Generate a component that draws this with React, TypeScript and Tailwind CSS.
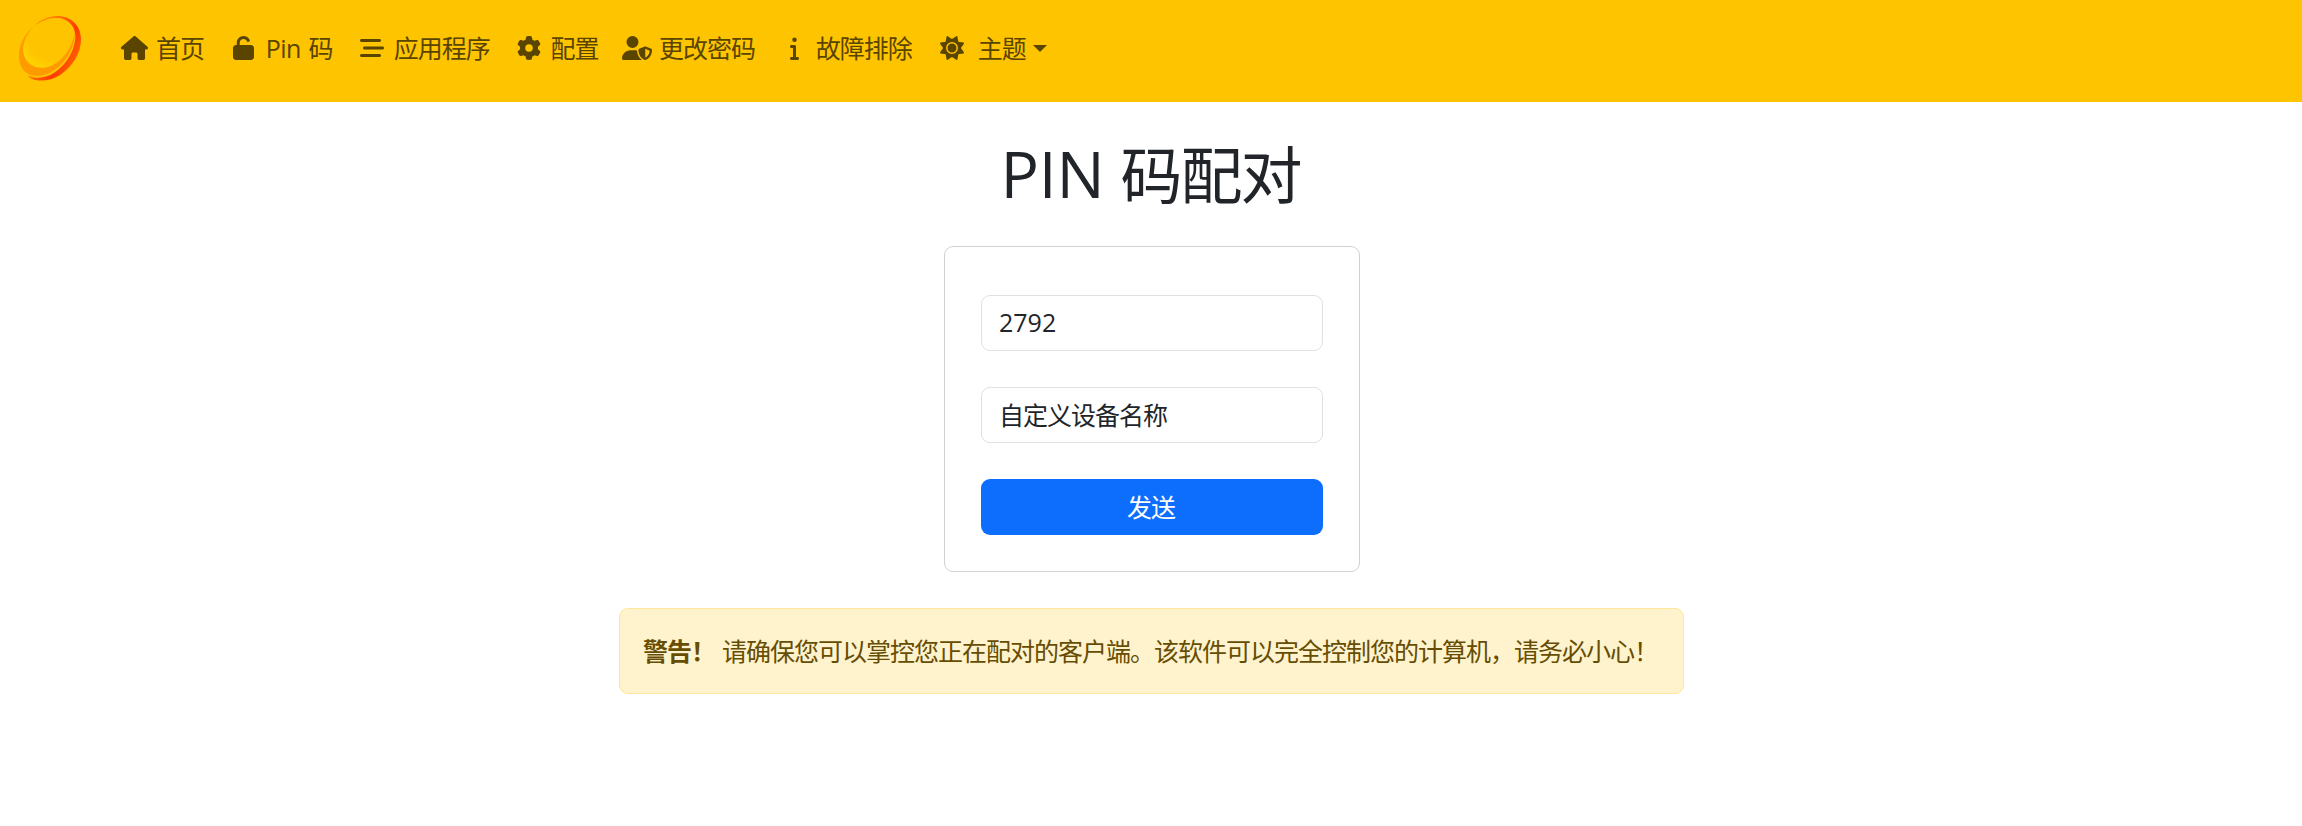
import type { ReactNode } from "react";
import { FaBarsStaggered, FaGear, FaHouse, FaInfo, FaSun, FaUnlock, FaUserShield } from "react-icons/fa6";

function Logo() {
  return (
    <svg viewBox="54 45 192 201" className="h-[67px] w-16">
      <defs>
        <linearGradient id="rim" x1="0" y1="0" x2="1" y2="0.6">
          <stop offset="0.3" stopColor="#ff8a00" />
          <stop offset="0.75" stopColor="#ff3a00" />
          <stop offset="1" stopColor="#ff6a00" />
        </linearGradient>
        <radialGradient id="face" cx="0.55" cy="0.4" r="0.6">
          <stop offset="0.75" stopColor="#ffc400" />
          <stop offset="1" stopColor="#ffd000" />
        </radialGradient>
      </defs>
      <path
        d="M84 227C100 248 148 246 182 224C220 198 243 158 243 118C243 78 214 48 172 48C146 48 120 60 104 77C128 60 158 50 182 55C208 61 224 80 226 104C228 146 200 196 160 220C134 236 104 236 84 227Z"
        fill="url(#rim)"
      />
      <path
        d="M104 77C74 98 56 136 57 170C58 210 84 230 116 228C160 224 198 186 215 146C223 128 226 110 223 92C222 126 196 174 158 194C120 212 80 198 73 160C66 124 86 94 104 77Z"
        fill="#ff9b00"
      />
      <path
        d="M104 79C128 58 160 50 184 57C208 64 222 80 222 98C218 144 184 190 140 202C108 208 78 194 71 162C64 132 82 98 104 79Z"
        fill="url(#face)"
      />
    </svg>
  );
}

function NavItem({
  icon,
  children,
  className = "gap-[6.600px]",
}: {
  icon: ReactNode;
  children: ReactNode;
  className?: string;
}) {
  return (
    <a href="#" className={`flex h-9 items-center px-3 whitespace-nowrap ${className}`}>
      <span className="flex w-[30px] shrink-0 justify-center">{icon}</span>
      <span>{children}</span>
    </a>
  );
}

export default function App() {
  return (
    <div className="min-h-[826px] bg-white font-['Open_Sans','Noto_Sans_CJK_SC',sans-serif] text-[25px] leading-9 tracking-[-1px] text-[#212529]">
      <nav className="flex h-[102px] items-start bg-[#ffc400] pt-[30px] text-[#594400]">
        <div className="-mt-[15px] ml-[18px] w-[89.500px]">
          <Logo />
        </div>
        <NavItem icon={<FaHouse className="h-6 w-[27px]" />}>首页</NavItem>
        <NavItem icon={<FaUnlock className="h-6 w-[21px]" />}>
          <span className="ml-[1px] inline-block w-[67.500px]">
            <span className="mr-[2px] tracking-[-0.500px]">Pin</span> 码
          </span>
        </NavItem>
        <NavItem icon={<FaBarsStaggered className="h-6 w-6" />}>应用程序</NavItem>
        <NavItem icon={<FaGear className="h-6 w-6" />}>配置</NavItem>
        <NavItem icon={<FaUserShield className="h-6 w-[30px]" />}>更改密码</NavItem>
        <NavItem icon={<FaInfo className="h-6 w-[9px]" />}>故障排除</NavItem>
        <NavItem icon={<FaSun className="h-6 w-6" />} className="ml-[1px] gap-[11px]">
          主题
          <span className="ml-[7px] inline-block border-x-[7px] border-t-[7px] border-x-transparent border-t-[#594400] align-[6px]" />
        </NavItem>
      </nav>
      <main className="flex flex-col items-center pl-[2px]">
        <h1 className="mt-[37px] mr-[3px] flex h-[72px] items-center text-[62px] leading-[72px] tracking-[-2px]">
          <span className="-mt-[2px] text-[64px] tracking-[-0.250px]">PIN</span>
          <span className="ml-[16px]">码配对</span>
        </h1>
        <form className="mt-[35px] flex h-[326px] w-[416px] flex-col gap-9 rounded-[9px] border border-[#d2d2d2] px-9 pt-12">
          <input
            readOnly
            value="2792"
            className="h-14 w-full rounded-[9px] border border-[#dee2e6] px-[17px] pb-[2px] tracking-normal outline-none"
          />
          <input
            readOnly
            value="自定义设备名称"
            className="h-14 w-full rounded-[9px] border border-[#dee2e6] px-[17px] pb-[2px] outline-none"
          />
          <button type="button" className="h-14 w-full rounded-[9px] bg-[#0d6efd] pr-[2px] text-white">
            发送
          </button>
        </form>
        <div className="mt-9 mr-[1px] flex h-[86px] w-[1065px] items-center rounded-[9px] border border-[#ffe69c] bg-[#fff3cd] px-[23px] whitespace-nowrap text-[#664d03]">
          <b className="mr-[7px] font-bold">警告！</b>
          <span>请确保您可以掌控您正在配对的客户端。该软件可以完全控制您的计算机，请务必小心！</span>
        </div>
      </main>
    </div>
  );
}
